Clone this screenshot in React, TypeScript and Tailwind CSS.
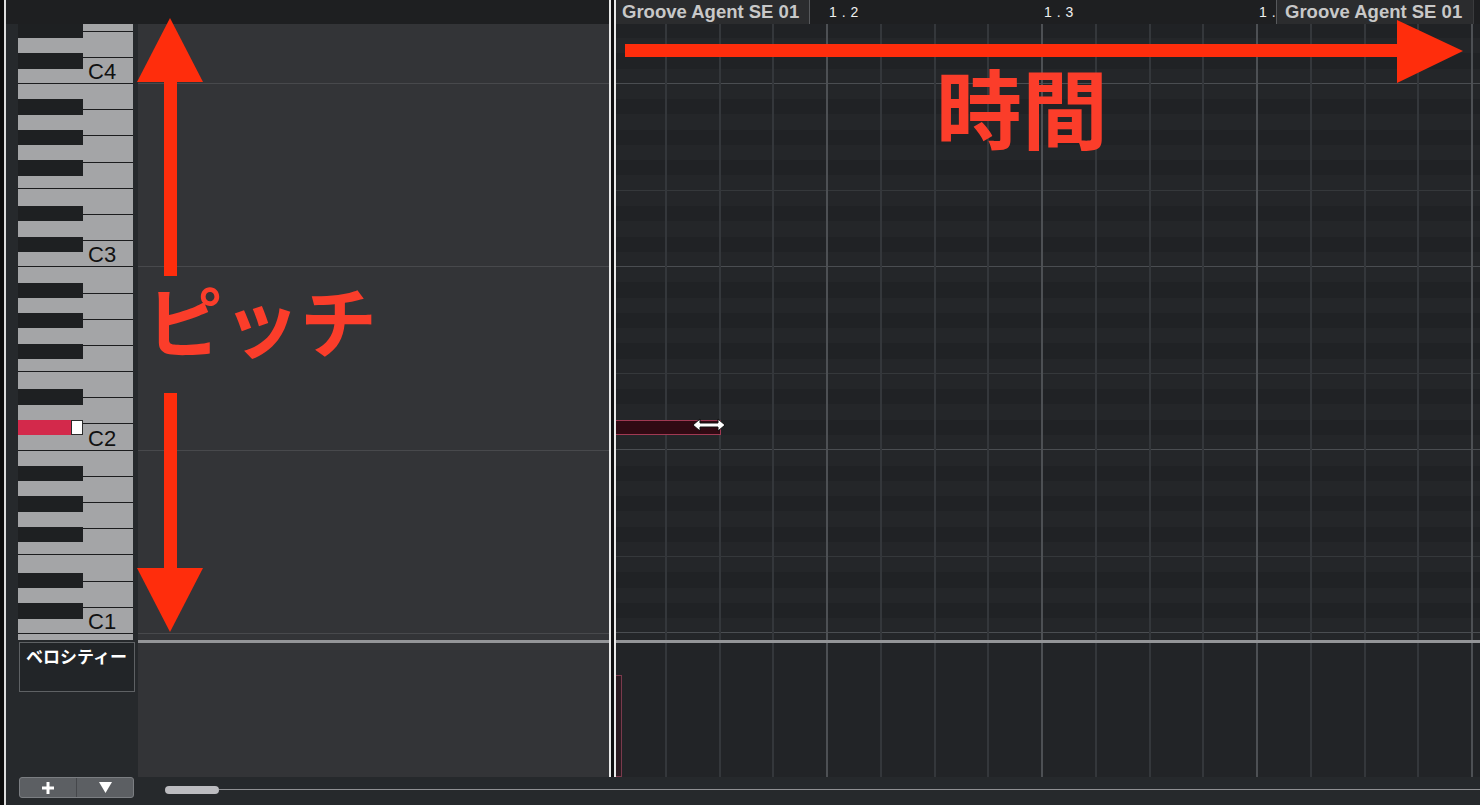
import React from 'react';

// octaves shown in the roll, top to bottom
const OCTAVES = [4, 3, 2, 1, 0];
const WHITE_KEYS = ['B', 'A', 'G', 'F', 'E', 'D', 'C'];
// semitone rows of one octave, top (B) to bottom (C)
const ROWS = ['B', 'A#', 'A', 'G#', 'G', 'F#', 'F', 'E', 'D#', 'D', 'C#', 'C'];
const SIXTEENTHS = Array.from({ length: 16 }, (_, i) => i);

const jp = "font-['Noto_Sans_CJK_JP',sans-serif]";

function KeyboardOctave({ octave }: { octave: number }) {
  return (
    <div className="relative h-[183.333px]">
      {WHITE_KEYS.map((k) => (
        <div
          key={k}
          className="flex h-[26.1905px] items-end border-b border-[#1b1c1e] bg-[#a4a5a7] pl-[70px]"
        >
          {k === 'C' && octave > 0 && (
            <span className="text-[22px] leading-none text-[#111]">C{octave}</span>
          )}
        </div>
      ))}
      <div className="absolute inset-0 flex flex-col">
        {ROWS.map((r) => (
          <div key={r} className="h-[15.2778px] shrink-0">
            {r.endsWith('#') &&
              (octave === 2 && r === 'C#' ? (
                <div className="flex h-full">
                  <div className="w-[53px] bg-[#d3294b]" />
                  <div className="w-[12px] border border-[#2a2a2a] bg-white" />
                </div>
              ) : (
                <div className="h-full w-[65px] bg-[#1e2022]" />
              ))}
          </div>
        ))}
      </div>
    </div>
  );
}

function GridOctave() {
  return (
    <div className="flex flex-col">
      {ROWS.map((r) => (
        <div
          key={r}
          className={`h-[15.2778px] shrink-0 ${r.endsWith('#') ? 'bg-[#202225]' : 'bg-[#242629]'} ${
            r === 'F' ? 'border-b border-[#35383b]' : ''
          } ${r === 'C' ? 'border-b border-[#4a4d51]' : ''}`}
        />
      ))}
    </div>
  );
}

function GridLines() {
  return (
    <div className="pointer-events-none absolute inset-0 flex pl-[4px]">
      {SIXTEENTHS.map((i) => (
        <div
          key={i}
          className={`h-full w-[53.75px] shrink-0 border-r-2 ${
            i % 4 === 3 ? 'border-[#4d5054]' : 'border-[#34373b]'
          }`}
        />
      ))}
    </div>
  );
}

export default function App() {
  return (
    <div className="relative flex h-[805px] w-[1480px] overflow-hidden bg-[#26292c] font-['Liberation_Sans',Arial,sans-serif]">
      <div className="w-[4px] shrink-0 bg-[#0c0c0c]" />
      <div className="w-[2px] shrink-0 bg-[#dcdcdc]" />

      <div className="relative flex w-[1474px] flex-col">
        {/* Ruler */}
        <div className="flex h-[24px] bg-[#1e1f21]">
          <div className="w-[603px]" />
          <div className="flex w-[871px]">
            <div className="w-[5px]" />
            <div className="flex w-[196px] items-center border-r border-[#57595c] bg-[#2b2c2e] pl-[8px] text-[18.5px] font-bold whitespace-nowrap text-[#c8c8c8]">
              Groove Agent SE 01
            </div>
            <div className="w-[18px]" />
            <div className="flex w-[215px] items-center pl-[1px] text-[14px] tracking-[0.5px] whitespace-nowrap text-[#f0f0f0]">
              1 . 2
            </div>
            <div className="flex w-[215px] items-center pl-[1px] text-[14px] tracking-[0.5px] whitespace-nowrap text-[#f0f0f0]">
              1 . 3
            </div>
            <div className="flex w-[215px]">
              <span className="flex w-[18px] items-center overflow-hidden pl-[1px] text-[14px] tracking-[0.5px] whitespace-nowrap text-[#f0f0f0]">
                1 .
              </span>
              <div className="flex w-[197px] items-center border-l border-[#57595c] bg-[#2b2c2e] pl-[8px] text-[18.5px] font-bold whitespace-nowrap text-[#c8c8c8]">
                Groove Agent SE 01
              </div>
            </div>
            <div className="flex-1 border-l border-[#3a3b3d]" />
          </div>
        </div>

        {/* Keyboard + editor */}
        <div className="flex h-[753px]">
          <div className="flex w-[132px] shrink-0 flex-col bg-[#26292c]">
            <div className="ml-[12px] h-[616px] w-[115px] overflow-hidden">
              <div className="-mt-[123.3px]">
                {OCTAVES.map((o) => (
                  <KeyboardOctave key={o} octave={o} />
                ))}
              </div>
            </div>
            <div
              className={`ml-[13px] mt-[2px] h-[50px] w-[116px] border border-[#5e6164] bg-[#222528] px-[6px] pt-[4px] text-[17px] font-bold leading-none whitespace-nowrap text-white ${jp}`}
            >
              ベロシティー
            </div>
          </div>

          <div className="flex w-[1342px] flex-col">
            <div className="flex h-[616px]">
              <div className="w-[471px] overflow-hidden bg-[#333437]">
                <div className="-mt-[123.3px]">
                  {OCTAVES.map((o) => (
                    <div key={o} className="h-[183.333px] border-b border-[#48494c]" />
                  ))}
                </div>
              </div>
              <div className="relative w-[871px] overflow-hidden">
                <div className="-mt-[123.3px]">
                  {OCTAVES.map((o) => (
                    <GridOctave key={o} />
                  ))}
                </div>
                <GridLines />
                {/* note event on C#2 */}
                <div className="absolute left-[6px] top-[396px] h-[15px] w-[106px] border border-[#a13953] bg-[#300a13]" />
                <svg className="absolute left-[83px] top-[394px]" width="34" height="14" viewBox="0 0 34 14">
                  <polygon
                    points="1,7 8,1 8,5 26,5 26,1 33,7 26,13 26,9 8,9 8,13"
                    fill="#fff"
                    stroke="#111"
                    strokeWidth="1"
                  />
                </svg>
              </div>
            </div>
            <div className="h-[3px] bg-[#949598]" />
            <div className="flex h-[134px]">
              <div className="w-[471px] bg-[#333437]" />
              <div className="relative w-[871px] bg-[#222427]">
                <GridLines />
                <div className="absolute left-[6px] top-[32px] h-[102px] w-[7px] border border-[#7a3a4c] bg-[#2b1b21]" />
              </div>
            </div>
          </div>
        </div>

        {/* Bottom bar */}
        <div className="flex h-[28px] items-start">
          <div className="ml-[13px] flex h-[21px] w-[115px] overflow-hidden rounded-[3px] border border-[#7b7e82] bg-[#5c5f63]">
            <div className="flex w-[57px] items-center justify-center border-r border-[#45474b]">
              <svg width="14" height="14" viewBox="0 0 14 14">
                <path d="M7 1v12M1 7h12" stroke="#fff" strokeWidth="3" />
              </svg>
            </div>
            <div className="flex flex-1 items-center justify-center">
              <svg width="13" height="11" viewBox="0 0 13 11">
                <polygon points="0,0 13,0 6.5,11" fill="#fff" />
              </svg>
            </div>
          </div>
          <div className="ml-[31px] mt-[9px] h-[8px] w-[54px] rounded-full bg-[#bcbcc0]" />
          <div className="mt-[12px] h-px flex-1 bg-[#8f9093]" />
        </div>

        {/* start marker */}
        <div className="pointer-events-none absolute left-[603px] top-0 flex h-[777px]">
          <div className="w-[2px] bg-[#e9e9e9]" />
          <div className="w-[3px] bg-[#0f0f10]" />
          <div className="w-[2px] bg-[#e9e9e9]" />
        </div>
      </div>

      {/* pitch / time arrows */}
      <svg className="pointer-events-none absolute inset-0" width="1480" height="805" viewBox="0 0 1480 805">
        <g fill="#ff2d0c">
          <polygon points="170,18 203,82 137,82" />
          <rect x="164" y="81" width="13" height="195" />
          <rect x="164" y="393" width="13" height="177" />
          <polygon points="137,568 203,568 170,632" />
          <rect x="625" y="44" width="775" height="13" />
          <polygon points="1397,20 1463,51 1397,83" />
        </g>
      </svg>
      <span className={`pointer-events-none absolute left-[146px] top-[280px] text-[77px] font-bold leading-none text-[#fb3d2a] ${jp}`}>
        ピッチ
      </span>
      <span className={`pointer-events-none absolute left-[936px] top-[63px] text-[86px] font-bold leading-none text-[#fb3d2a] ${jp}`}>
        時間
      </span>
    </div>
  );
}
